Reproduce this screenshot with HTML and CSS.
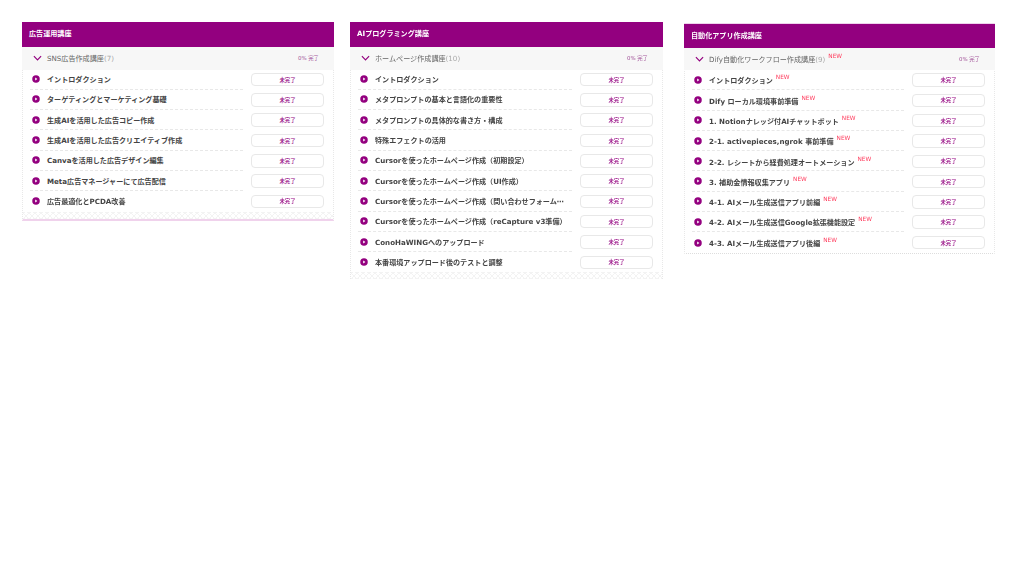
FILE: index.html
```html
<!DOCTYPE html>
<html lang="ja">
<head>
    <meta charset="UTF-8">
    <meta name="viewport" content="width=device-width, initial-scale=1.0">
    <title>講座一覧</title>
    <link rel="stylesheet" href="styles.css">
</head>
<body>
    <svg class="icon-defs" width="0" height="0">
        <symbol id="play" viewBox="0 0 16 16">
            <circle cx="8" cy="8" r="7.5" fill="#93007f"/>
            <path d="M6.4 5 10.8 8 6.4 11Z" fill="#fff"/>
        </symbol>
        <symbol id="chevron" viewBox="0 0 10 6">
            <path d="M1 1 5 5 9 1" fill="none" stroke="#93007f" stroke-width="1.3"/>
        </symbol>
    </svg>

    <div class="courses">
        <section class="card card-ads">
            <h2 class="card-title">広告運用講座</h2>
            <div class="sub-head">
                <svg class="chevron"><use href="#chevron"/></svg>
                <span class="sub-title">SNS広告作成講座<span class="count">(7)</span></span>
                <span class="progress">0% 完了</span>
            </div>
            <ul class="lessons">
                <li class="lesson"><div class="lesson-name"><svg class="play"><use href="#play"/></svg><span class="lesson-text">イントロダクション</span></div><button class="status">未完了</button></li>
                <li class="lesson"><div class="lesson-name"><svg class="play"><use href="#play"/></svg><span class="lesson-text">ターゲティングとマーケティング基礎</span></div><button class="status">未完了</button></li>
                <li class="lesson"><div class="lesson-name"><svg class="play"><use href="#play"/></svg><span class="lesson-text">生成AIを活用した広告コピー作成</span></div><button class="status">未完了</button></li>
                <li class="lesson"><div class="lesson-name"><svg class="play"><use href="#play"/></svg><span class="lesson-text">生成AIを活用した広告クリエイティブ作成</span></div><button class="status">未完了</button></li>
                <li class="lesson"><div class="lesson-name"><svg class="play"><use href="#play"/></svg><span class="lesson-text">Canvaを活用した広告デザイン編集</span></div><button class="status">未完了</button></li>
                <li class="lesson"><div class="lesson-name"><svg class="play"><use href="#play"/></svg><span class="lesson-text">Meta広告マネージャーにて広告配信</span></div><button class="status">未完了</button></li>
                <li class="lesson last"><div class="lesson-name"><svg class="play"><use href="#play"/></svg><span class="lesson-text">広告最適化とPCDA改善</span></div><button class="status">未完了</button></li>
            </ul>
            <div class="card-pattern"></div>
        </section>

        <section class="card card-ai">
            <h2 class="card-title">AIプログラミング講座</h2>
            <div class="sub-head">
                <svg class="chevron"><use href="#chevron"/></svg>
                <span class="sub-title">ホームページ作成講座<span class="count">(10)</span></span>
                <span class="progress">0% 完了</span>
            </div>
            <ul class="lessons">
                <li class="lesson"><div class="lesson-name"><svg class="play"><use href="#play"/></svg><span class="lesson-text">イントロダクション</span></div><button class="status">未完了</button></li>
                <li class="lesson"><div class="lesson-name"><svg class="play"><use href="#play"/></svg><span class="lesson-text">メタプロンプトの基本と言語化の重要性</span></div><button class="status">未完了</button></li>
                <li class="lesson"><div class="lesson-name"><svg class="play"><use href="#play"/></svg><span class="lesson-text">メタプロンプトの具体的な書き方・構成</span></div><button class="status">未完了</button></li>
                <li class="lesson"><div class="lesson-name"><svg class="play"><use href="#play"/></svg><span class="lesson-text">特殊エフェクトの活用</span></div><button class="status">未完了</button></li>
                <li class="lesson"><div class="lesson-name"><svg class="play"><use href="#play"/></svg><span class="lesson-text">Cursorを使ったホームページ作成（初期設定）</span></div><button class="status">未完了</button></li>
                <li class="lesson"><div class="lesson-name"><svg class="play"><use href="#play"/></svg><span class="lesson-text">Cursorを使ったホームページ作成（UI作成）</span></div><button class="status">未完了</button></li>
                <li class="lesson"><div class="lesson-name"><svg class="play"><use href="#play"/></svg><span class="lesson-text">Cursorを使ったホームページ作成（問い合わせフォーム⋯</span></div><button class="status">未完了</button></li>
                <li class="lesson"><div class="lesson-name"><svg class="play"><use href="#play"/></svg><span class="lesson-text">Cursorを使ったホームページ作成（reCapture v3準備）</span></div><button class="status">未完了</button></li>
                <li class="lesson"><div class="lesson-name"><svg class="play"><use href="#play"/></svg><span class="lesson-text">ConoHaWINGへのアップロード</span></div><button class="status">未完了</button></li>
                <li class="lesson last"><div class="lesson-name"><svg class="play"><use href="#play"/></svg><span class="lesson-text">本番環境アップロード後のテストと調整</span></div><button class="status">未完了</button></li>
            </ul>
            <div class="card-pattern"></div>
        </section>

        <section class="card card-apps">
            <h2 class="card-title">自動化アプリ作成講座</h2>
            <div class="sub-head">
                <svg class="chevron"><use href="#chevron"/></svg>
                <span class="sub-title">Dify自動化ワークフロー作成講座<span class="count">(9)</span><sup class="new">NEW</sup></span>
                <span class="progress">0% 完了</span>
            </div>
            <ul class="lessons">
                <li class="lesson"><div class="lesson-name"><svg class="play"><use href="#play"/></svg><span class="lesson-text">イントロダクション<sup class="new">NEW</sup></span></div><button class="status">未完了</button></li>
                <li class="lesson"><div class="lesson-name"><svg class="play"><use href="#play"/></svg><span class="lesson-text">Dify ローカル環境事前準備<sup class="new">NEW</sup></span></div><button class="status">未完了</button></li>
                <li class="lesson"><div class="lesson-name"><svg class="play"><use href="#play"/></svg><span class="lesson-text">1. Notionナレッジ付AIチャットボット<sup class="new">NEW</sup></span></div><button class="status">未完了</button></li>
                <li class="lesson"><div class="lesson-name"><svg class="play"><use href="#play"/></svg><span class="lesson-text">2-1. activepieces,ngrok 事前準備<sup class="new">NEW</sup></span></div><button class="status">未完了</button></li>
                <li class="lesson"><div class="lesson-name"><svg class="play"><use href="#play"/></svg><span class="lesson-text">2-2. レシートから経費処理オートメーション<sup class="new">NEW</sup></span></div><button class="status">未完了</button></li>
                <li class="lesson"><div class="lesson-name"><svg class="play"><use href="#play"/></svg><span class="lesson-text">3. 補助金情報収集アプリ<sup class="new">NEW</sup></span></div><button class="status">未完了</button></li>
                <li class="lesson"><div class="lesson-name"><svg class="play"><use href="#play"/></svg><span class="lesson-text">4-1. AIメール生成送信アプリ前編<sup class="new">NEW</sup></span></div><button class="status">未完了</button></li>
                <li class="lesson"><div class="lesson-name"><svg class="play"><use href="#play"/></svg><span class="lesson-text">4-2. AIメール生成送信Google拡張機能設定<sup class="new">NEW</sup></span></div><button class="status">未完了</button></li>
                <li class="lesson last"><div class="lesson-name"><svg class="play"><use href="#play"/></svg><span class="lesson-text">4-3. AIメール生成送信アプリ後編<sup class="new">NEW</sup></span></div><button class="status">未完了</button></li>
            </ul>
        </section>
    </div>
</body>
</html>
```

FILE: styles.css
```css
* {
    margin: 0;
    padding: 0;
    box-sizing: border-box;
}
body {
    min-height: 100vh;
    background: #fff;
    font-family: "DejaVu Sans", "Noto Sans CJK JP", sans-serif;
    color: #444;
}
.icon-defs {
    position: absolute;
}
.courses {
    display: flex;
    align-items: flex-start;
    padding: 22px 0 0 22px;
    filter: blur(0.35px);
}
.card {
    width: 312px;
    background: #fff;
    border-left: 1px dotted #e8e8e8;
    border-right: 1px dotted #e8e8e8;
}
.card-ads {
    border-bottom: 2px solid #f0d2ec;
}
.card-ai {
    width: 313px;
    margin-left: 16px;
}
.card-apps {
    width: 311px;
    margin-left: 21px;
    margin-top: 0.5px;
    border-top: 1px solid #efd3ec;
    border-bottom: 1px dotted #ddd;
}
.card-title {
    height: 24.5px;
    margin: 0 -1px;
    line-height: 24px;
    padding-left: 7px;
    background: #93007f;
    color: #fff;
    font-size: 7.1px;
    font-weight: 700;
}
.sub-head {
    display: flex;
    align-items: center;
    height: 23px;
    margin: 0 -1px;
    padding: 0 15px 0 10.5px;
    background: #f7f7f7;
    font-size: 7.1px;
}
.card-apps .sub-head {
    height: 22px;
}
.chevron {
    width: 9px;
    height: 6px;
    margin-right: 5.5px;
}
.sub-title {
    color: #666;
}
.count {
    color: #aaa;
}
.progress {
    margin-left: auto;
    font-size: 5.4px;
    color: #a3559a;
}
.lessons {
    list-style: none;
}
.lesson {
    display: flex;
    align-items: center;
    height: 20.3px;
    padding: 0 9px 0 7px;
    gap: 8px;
}
.lesson-name {
    display: flex;
    align-items: center;
    flex: 1;
    min-width: 0;
    height: 100%;
    padding-left: 2px;
    border-bottom: 1px dashed #e8e8e8;
}
.last .lesson-name {
    border-bottom: none;
}
.play {
    flex: none;
    width: 8px;
    height: 8px;
    margin-right: 7px;
}
.lesson-text {
    white-space: nowrap;
    font-size: 7.1px;
    font-weight: 700;
    color: #444;
}
.card-apps .lesson-text {
    padding-top: 1.5px;
}
.status {
    flex: none;
    width: 73px;
    height: 13.5px;
    background: #fff;
    border: 1px solid #e8e8e8;
    border-radius: 4px;
    font-family: inherit;
    font-size: 5.4px;
    font-weight: 500;
    color: #93007f;
}
.new {
    margin-left: 3px;
    font-size: 5.8px;
    font-weight: 400;
    color: #ff3d5e;
    vertical-align: 4px;
    line-height: 0;
}
.card-pattern {
    height: 7px;
    background:
        repeating-linear-gradient(45deg, transparent 0 3px, #f3f3f3 3px 4px),
        repeating-linear-gradient(-45deg, transparent 0 3px, #f3f3f3 3px 4px);
    background-size: 6px 6px;
}
```
